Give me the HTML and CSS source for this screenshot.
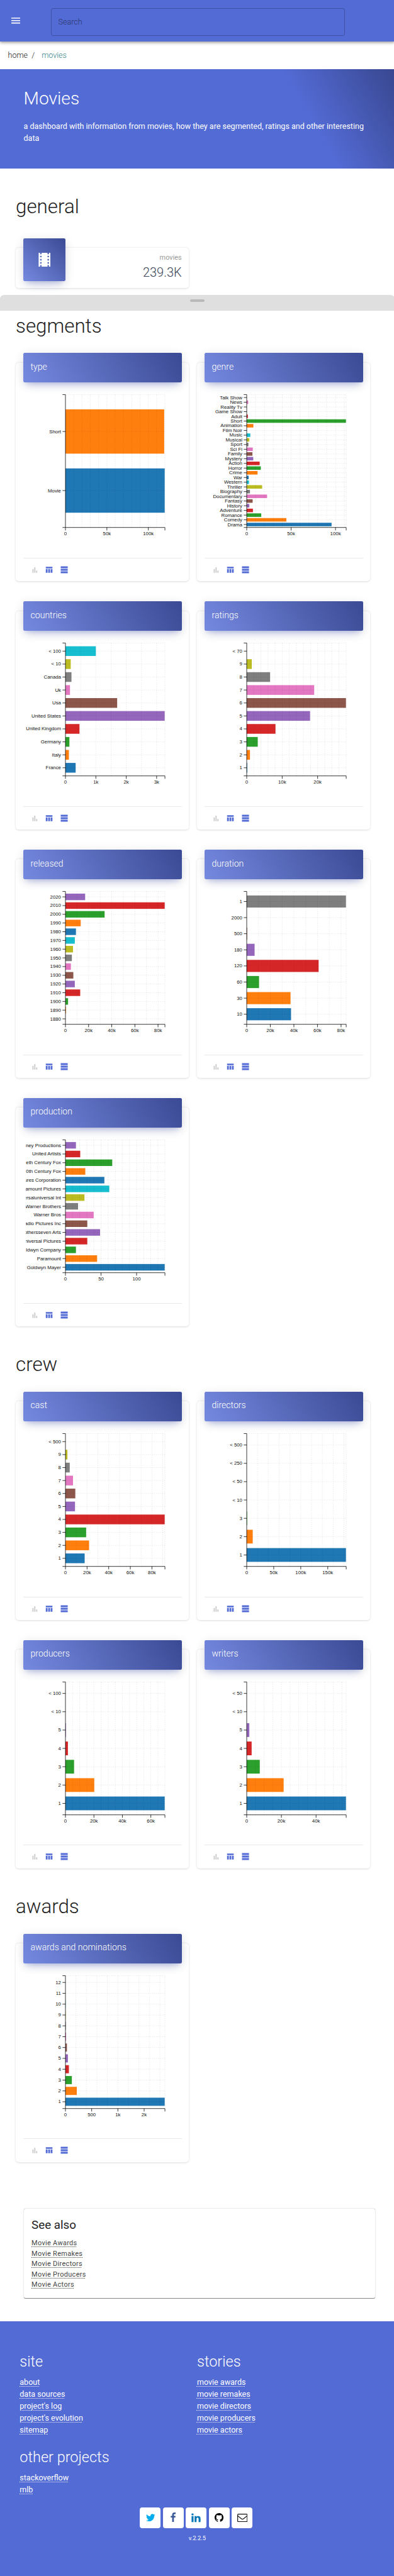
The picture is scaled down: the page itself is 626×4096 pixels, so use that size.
FILE: index.html
```html
<!DOCTYPE html>
<html lang="en">
<head>
<meta charset="utf-8">
<title>Movies</title>
<link rel="stylesheet" href="styles.css">
</head>
<body>
<svg class="defs" aria-hidden="true">
  <symbol id="i-bar" viewBox="0 0 24 24"><path d="M6 10h3v10H6zM11 5h3v15h-3zM16 14h3v6h-3z"/></symbol>
  <symbol id="i-table" viewBox="0 0 24 24"><path d="M3 4h18v4H3zM3 10h4.800v10H3zM9.600 10h4.800v10H9.600zM16.200 10H21v10h-4.800z"/></symbol>
  <symbol id="i-list" viewBox="0 0 24 24"><path d="M2.500 2.500h19v5.200h-19zM2.500 9.500h19v5h-19zM2.500 16.300h19v5.200h-19z"/></symbol>
</svg>
<div class="page">
  <header class="appbar">
    <svg class="burger" viewBox="0 0 18 12"><path d="M0 0h18v2H0zM0 5h18v2H0zM0 10h18v2H0z"/></svg>
    <div class="search">Search</div>
  </header>
  <nav class="crumbs"><span>home</span><span class="sep">/</span><a class="current">movies</a></nav>
  <div class="hero">
    <h1>Movies</h1>
    <p>a dashboard with information from movies, how they are segmented, ratings and other interesting data</p>
  </div>
  <section class="general">
    <h2>general</h2>
    <div class="card stat">
      <div class="stat-icon"><svg viewBox="0 0 24 28"><path fill-rule="evenodd" d="M0 0h3v3h3V0h12v3h3V0h3.500v28H21v-3h-3v3H6v-3H3v3H0zM3 6v3h3V6zM3 12.500v3h3v-3zM3 19v3h3v-3zM18 6v3h3V6zM18 12.500v3h3v-3zM18 19v3h3v-3z"/></svg></div>
      <div class="stat-text"><div class="stat-label">movies</div><div class="stat-value">239.3K</div></div>
    </div>
  </section>
  <div class="sheet"><span class="handle"></span></div>
  <section class="first"><h2>segments</h2><div class="grid" id="segments"></div></section>
  <section><h2>crew</h2><div class="grid" id="crew"></div></section>
  <section><h2>awards</h2><div class="grid" id="awards"></div></section>
  <aside class="also">
    <h3>See also</h3>
    <a>Movie Awards</a><a>Movie Remakes</a><a>Movie Directors</a><a>Movie Producers</a><a>Movie Actors</a>
  </aside>
  <footer class="footer">
    <div class="cols">
      <div class="col"><h4>site</h4><a>about</a><a>data sources</a><a>project's log</a><a>project's evolution</a><a>sitemap</a></div>
      <div class="col"><h4>stories</h4><a>movie awards</a><a>movie remakes</a><a>movie directors</a><a>movie producers</a><a>movie actors</a></div>
      <div class="col"><h4>other projects</h4><a>stackoverflow</a><a>mlb</a></div>
    </div>
    <div class="social">
      <a class="btn tw"><svg width="18.500" height="18.500" viewBox="0 0 24 24"><path d="M23.953 4.570a10 10 0 01-2.825.775 4.958 4.958 0 002.163-2.723c-.951.555-2.005.959-3.127 1.184a4.920 4.920 0 00-8.384 4.482C7.690 8.095 4.067 6.130 1.640 3.162a4.822 4.822 0 00-.666 2.475c0 1.710.870 3.213 2.188 4.096a4.904 4.904 0 01-2.228-.616v.060a4.923 4.923 0 003.946 4.827 4.996 4.996 0 01-2.212.085 4.936 4.936 0 004.604 3.417 9.867 9.867 0 01-6.102 2.105c-.390 0-.779-.023-1.170-.067a13.995 13.995 0 007.557 2.209c9.053 0 13.998-7.496 13.998-13.985 0-.210 0-.420-.015-.630A9.935 9.935 0 0024 4.590z"/></svg></a>
      <a class="btn fb"><svg width="20.500" height="20.500" viewBox="0 0 1792 1792"><path d="M1343 12v264h-157q-86 0-116 36t-30 108v189h293l-39 296h-254v759h-306v-759h-255v-296h255v-218q0-186 104-288.500t277-102.500q147 0 228 12z"/></svg></a>
      <a class="btn li"><svg width="21.500" height="21.500" viewBox="0 0 1792 1792"><path d="M477 625v991h-330v-991h330zm21-306q1 73-50.500 122t-135.500 49h-2q-82 0-132-49t-50-122q0-74 51.500-122.500t134.500-48.500 133 48.500 51 122.500zm1166 729v568h-329v-530q0-105-40.500-164.500t-126.500-59.500q-63 0-105.500 34.500t-63.500 85.500q-11 30-11 81v553h-329q2-399 2-647t-1-296l-1-48h329v144h-2q20-32 41-56t56.500-52 87-43.500 114.500-15.500q171 0 275 113.500t104 332.500z"/></svg></a>
      <a class="btn gh"><svg width="18" height="18" viewBox="0 0 16 16"><path d="M8 0C3.580 0 0 3.580 0 8c0 3.540 2.290 6.530 5.470 7.590.400.070.550-.170.550-.380 0-.190-.010-.820-.010-1.490-2.010.370-2.530-.490-2.690-.940-.090-.230-.480-.940-.820-1.130-.280-.150-.680-.520-.010-.530.630-.010 1.080.580 1.230.820.720 1.210 1.870.870 2.330.660.070-.520.280-.870.510-1.070-1.780-.200-3.640-.890-3.640-3.950 0-.870.310-1.590.820-2.150-.080-.200-.360-1.020.080-2.120 0 0 .670-.210 2.200.820.640-.180 1.320-.270 2-.270s1.360.090 2 .270c1.530-1.040 2.200-.820 2.200-.820.440 1.100.160 1.920.080 2.120.510.560.820 1.270.820 2.150 0 3.070-1.870 3.750-3.650 3.950.290.250.540.730.540 1.480 0 1.070-.010 1.930-.010 2.200 0 .210.150.460.550.380A8.010 8.010 0 0 0 16 8c0-4.420-3.580-8-8-8z"/></svg></a>
      <a class="btn ml"><svg width="21" height="17" viewBox="0 0 21 17"><rect x=".8" y=".8" width="19.400" height="15.400" rx="1.500"/><path d="M1 4.300L8.400 10.300Q10.500 12 12.600 10.300L20 4.300"/></svg></a>
    </div>
    <div class="version">v.2.2.5</div>
  </footer>
</div>
<script src="charts.js"></script>
</body>
</html>
```
FILE: styles.css
```css
html, body { margin: 0; height: 4096px; overflow: hidden; background: #fff; }
body { font-family: Roboto, "Liberation Sans", sans-serif; color: #212121; }
h1, h2, h3, h4, p { margin: 0; font-weight: 300; }
.defs { display: none; }
.page { zoom: 0.7825; width: 801px; height: 5235px; display: flex; flex-direction: column; background: #fff; }
.page > * { flex-shrink: 0; }

.appbar { height: 84px; box-sizing: border-box; padding: 16px 101px 0 23px; background: #536bd5; display: flex; align-items: flex-start; position: relative; box-shadow: 0 2px 4px -1px rgba(0,0,0,.2), 0 4px 5px rgba(0,0,0,.14), 0 1px 10px rgba(0,0,0,.12); }
.burger { width: 18px; height: 12px; margin: 20px 63px 0 0; fill: #fff; }
.search { flex: 1; height: 54px; border: 1px solid #3f51a3; border-radius: 4px; font-size: 16px; line-height: 54px; padding-left: 13px; font-weight: 300; color: #2a3566; }

.crumbs { height: 57px; padding-left: 16px; display: flex; font-size: 16px; line-height: 57px; font-weight: 300; }
.sep { margin: 0 14px 0 8px; }
.current { color: #2f7f86; }

.hero { height: 201px; box-sizing: border-box; padding: 39px 48px 0; color: #fff; background: linear-gradient(60deg, #536bd5 75%, #394790 100%); }
.hero h1 { font-size: 36px; line-height: 42px; }
.hero p { font-size: 16px; line-height: 24px; font-weight: 400; margin-top: 24px; }

section { padding: 54px 48px 0 32px; }
h2 { font-size: 40px; line-height: 48px; margin-bottom: 50.500px; }
.general { padding-top: 54px; }
.general h2 { margin-bottom: 60px; }
.first { padding-top: 6.500px; }

.card { background: #fff; border-radius: 6px; box-shadow: 0 1px 4px rgba(0,0,0,.14); }
.stat { width: 352px; height: 81px; display: flex; justify-content: space-between; box-sizing: border-box; padding: 0 15px; margin-bottom: 15px; }
.stat-icon { width: 86px; height: 87px; margin-top: -20px; border-radius: 3px; display: flex; align-items: center; justify-content: center; background: linear-gradient(45deg, #7589e0, #3b4a94); box-shadow: 0 12px 20px -10px rgba(83,107,213,.28), 0 4px 20px rgba(0,0,0,.12), 0 7px 8px -5px rgba(83,107,213,.2); }
.stat-icon svg { width: 25px; height: 28px; fill: #fff; }
.stat-text { text-align: right; }
.stat-label { font-size: 14px; line-height: 20px; margin-top: 10px; color: #999; font-weight: 400; }
.stat-value { font-size: 25.600px; line-height: 36px; margin-top: 2px; color: #3c4858; font-weight: 300; }

.sheet { height: 32px; background: #dfdfdf; border-radius: 8px 8px 0 0; display: flex; justify-content: center; }
.handle { width: 30px; height: 6px; margin-top: 8px; border-radius: 3px; background: #b9b9b9; }

.grid { display: grid; grid-template-columns: 352px 352px; column-gap: 16px; row-gap: 60.400px; }
.chart-card { height: 444.300px; display: flex; flex-direction: column; }
.chart-head { height: 60px; margin: -20px 15px 0; border-radius: 3px; box-sizing: border-box; padding: 15px; font-size: 18px; line-height: 26px; font-weight: 300; color: #fff; background: linear-gradient(60deg, #7589e0, #3b4a94); box-shadow: 0 12px 20px -10px rgba(83,107,213,.28), 0 4px 20px rgba(0,0,0,.12), 0 7px 8px -5px rgba(83,107,213,.2); }
.chart { width: 312px; height: 320px; margin: 16px 0 0 20px; display: block; overflow: hidden; font: 10px "Liberation Sans", Arial, sans-serif; }
.chart .line { fill: none; stroke: #000; stroke-width: 1; }
.chart .rules { fill: none; stroke: #000; stroke-opacity: .1; stroke-dasharray: 2 2; }
.chart text { fill: #111; }
.tools { margin: 20.500px 15px 0; border-top: 1px solid #eaeaea; display: flex; gap: 12px; padding: 14px 0 0 14px; }
.tools svg { width: 18px; height: 18px; fill: #536bd5; }
.tools svg:first-child { fill: #c9c9cc; }

.also { margin: 94.700px 39px 48px 48px; height: 181px; box-sizing: border-box; padding: 20px 16px 0; border-radius: 3px; box-shadow: 0 1px 1px rgba(0,0,0,.45), 0 0 3px rgba(0,0,0,.14); display: flex; flex-direction: column; align-items: flex-start; }
.also h3 { font-size: 24px; line-height: 28px; font-weight: 400; margin-bottom: 12px; }
.also a, .footer .col a { text-decoration: underline dotted 1px; text-underline-offset: 2px; }
.also a { font-size: 14px; line-height: 21.200px; letter-spacing: .4px; font-weight: 400; color: #444; }

.footer { flex: 1; background: #536bd5; color: #fff; }
.cols { padding: 64px 40px 0; display: grid; grid-template-columns: 360px 1fr; row-gap: 24px; }
.col { display: flex; flex-direction: column; align-items: flex-start; }
.col h4 { font-size: 30px; line-height: 36px; margin-bottom: 12.500px; }
.col a { font-size: 16px; line-height: 24.200px; font-weight: 400; }
.social { display: flex; justify-content: center; gap: 4.700px; margin: 23.500px 0 0 -4px; }
.btn { width: 42px; height: 42px; border-radius: 5px; background: #fff; display: flex; align-items: center; justify-content: center; }
.tw { fill: #00acee; } .fb { fill: #3b5998; } .li { fill: #0077b5; }
.ml { fill: none; stroke: #111; stroke-width: 1.500; }
.version { font-size: 12px; line-height: 18px; text-align: center; margin-top: 12px; }
```
FILE: charts.js
```js
const COLORS = ['#1f77b4','#ff7f0e','#2ca02c','#d62728','#9467bd','#8c564b','#e377c2','#7f7f7f','#bcbd22','#17becf'];
const X = 80.5, Y = 9.5, W = 202, H = 270;

// rows run top to bottom as [label, bar length]; unit is the number of px per axis unit
const CHARTS = {
  segments: [
    { title: 'type', unit: 1.683, grid: 10, ticks: [[50,'50k'],[100,'100k']], rows: [['Short',200.5],['Movie',201.5]] },
    { title: 'genre', unit: 1.803, grid: 10, ticks: [[50,'50k'],[100,'100k']], rows: [['Talk Show',0],['News',3],['Reality Tv',0],['Game Show',0],['Adult',2.3],['Short',201.5],['Animation',13.5],['Film Noir',0],['Music',7.3],['Musical',5.3],['Sport',3.5],['Sci Fi',12.3],['Family',11.6],['Mystery',13.3],['Action',26.3],['Horror',28.6],['Crime',22],['War',4],['Western',4.6],['Thriller',31.3],['Biography',6.6],['Documentary',41.3],['Fantasy',12],['History',5.3],['Adventure',12.6],['Romance',29.5],['Comedy',80.5],['Drama',172.3]] },
    { title: 'countries', unit: 61.7, grid: .5, ticks: [[1,'1k'],[2,'2k'],[3,'3k']], rows: [['< 100',61.7],['< 10',10.7],['Canada',12.2],['Uk',9.2],['Usa',105],['United States',201.5],['United Kingdom',28.5],['Germany',8],['Italy',7],['France',20.7]] },
    { title: 'ratings', unit: 7.2, grid: 2, ticks: [[10,'10k'],[20,'20k']], rows: [['< 70',0],['9',10.3],['8',47.5],['7',137],['6',201.5],['5',128.6],['4',58.4],['3',22.4],['2',6.6],['1',1]] },
    { title: 'released', unit: 2.35, grid: 10, ticks: [[20,'20k'],[40,'40k'],[60,'60k'],[80,'80k']], rows: [['2020',40],['2010',201.5],['2000',79.5],['1990',31],['1980',21.3],['1970',19],['1960',15.3],['1950',13],['1940',11],['1930',16],['1920',19],['1910',30],['1900',5.3],['1890',1],['1880',0]] },
    { title: 'duration', unit: 2.395, grid: 10, ticks: [[20,'20k'],[40,'40k'],[60,'60k'],[80,'80k']], rows: [['1',201.5],['2000',0],['500',.8],['180',16],['120',146],['60',25],['30',89],['10',90]] },
    { title: 'production', unit: 1.444, grid: 10, ticks: [[50,'50'],[100,'100']], rows: [['ney Productions',21.3],['United Artists',30],['eth Century Fox',95],['0th Century Fox',40.3],['ures Corporation',79],['amount Pictures',89],['ersaluniversal Int',38.6],['Warner Brothers',25.6],['Warner Bros',57.3],['adio Pictures Inc',44.3],['othersseven Arts',70.3],['niversal Pictures',44.3],['ldwyn Company',21.3],['Paramount',64.3],['Goldwyn Mayer',201.5]] }
  ],
  crew: [
    { title: 'cast', unit: 2.195, grid: 10, ticks: [[20,'20k'],[40,'40k'],[60,'60k'],[80,'80k']], rows: [['< 500',0],['9',4],['8',8.7],['7',15.3],['6',20],['5',19.4],['4',201.5],['3',42],['2',48],['1',39]] },
    { title: 'directors', unit: 1.097, grid: 20, ticks: [[50,'50k'],[100,'100k'],[150,'150k']], rows: [['< 500',0],['< 250',0],['< 50',0],['< 10',0],['3',.7],['2',12.2],['1',201.5]] },
    { title: 'producers', unit: 2.89, grid: 5, ticks: [[20,'20k'],[40,'40k'],[60,'60k']], rows: [['< 100',0],['< 10',0],['5',.9],['4',5],['3',17.5],['2',58.5],['1',201.5]] },
    { title: 'writers', unit: 3.52, grid: 5, ticks: [[20,'20k'],[40,'40k']], rows: [['< 50',0],['< 10',0],['5',5.3],['4',10],['3',26.5],['2',75],['1',201.5]] }
  ],
  awards: [
    { title: 'awards and nominations', unit: .1065, grid: 200, ticks: [[500,'500'],[1000,'1k'],[1500,'2k']], rows: [['12',0],['11',0],['10',.3],['9',.4],['8',.8],['7',1.3],['6',3],['5',5],['4',7],['3',13],['2',23],['1',201.5]] }
  ]
};

function draw(c) {
  const n = c.rows.length, step = H / (n + .25);
  const mid = i => Y + step * (i + .625);
  let bars = '', marks = '', text = '', rules = `M${X} ${Y}H${X + W}V${Y + H}`;
  c.rows.forEach(([label, len], i) => {
    const m = mid(i);
    if (len) bars += `<rect x="${X}" y="${m - step * .375}" width="${len}" height="${step * .75}" fill="${COLORS[(n - 1 - i) % 10]}"/>`;
    rules += `M${X} ${m}H${X + W}`;
    marks += `M${X - 6} ${m}H${X}`;
    text += `<text x="${X - 9}" y="${m + 3.2}" text-anchor="end">${label.replace('<', '&lt;')}</text>`;
  });
  for (let v = c.grid; v * c.unit < W - .8; v += c.grid) rules += `M${X + v * c.unit} ${Y}V${Y + H}`;
  [[0, '0'], ...c.ticks].forEach(([v, label]) => {
    const x = X + v * c.unit;
    marks += `M${x} ${Y + H}v6`;
    text += `<text x="${x}" y="${Y + H + 16.1}" text-anchor="middle">${label}</text>`;
  });
  return `<svg class="chart">${bars}<path class="rules" d="${rules}"/><path class="line" d="M${X - 6} ${Y}H${X}V${Y + H}M${X - 6} ${Y + H}H${X + W}v6"/><path class="line" d="${marks}"/>${text}</svg>`;
}

for (const id in CHARTS) {
  document.getElementById(id).innerHTML = CHARTS[id].map(c =>
    `<article class="card chart-card"><div class="chart-head">${c.title}</div>${draw(c)}
     <div class="tools"><svg><use href="#i-bar"/></svg><svg><use href="#i-table"/></svg><svg><use href="#i-list"/></svg></div></article>`).join('');
}
```
